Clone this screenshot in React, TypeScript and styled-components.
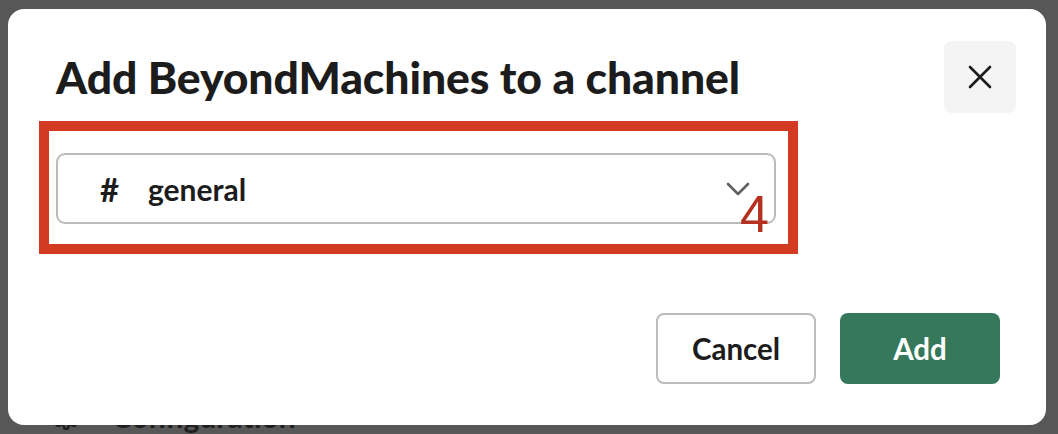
import React from "react";
import styled, { createGlobalStyle } from "styled-components";

const GlobalStyle = createGlobalStyle`
  html, body { margin: 0; padding: 0; }
  body {
    background: #575757;
    font-family: Lato, "Noto Sans", sans-serif;
    -webkit-font-smoothing: antialiased;
  }
`;

const Stage = styled.div`
  position: relative;
  width: 1058px;
  height: 434px;
  overflow: hidden;
  background: #575757;
  display: flex;
  flex-direction: column;
  justify-content: flex-end;
`;

const BehindRow = styled.div`
  display: flex;
  align-items: center;
  gap: 32px;
  padding-left: 52px;
  margin-bottom: -4px;
  color: #1f1f1f;
  font-family: Lato, sans-serif;
  font-weight: 700;
  font-size: 30px;
  height: 44px;
`;

const Modal = styled.div`
  position: absolute;
  left: 8px;
  top: 9px;
  width: 1038px;
  height: 416px;
  background: #ffffff;
  border-radius: 16px;
  display: flex;
  flex-direction: column;
  box-sizing: border-box;
`;

const Header = styled.div`
  display: flex;
  align-items: center;
  justify-content: space-between;
  padding: 32px 30px 0 48px;
`;

const Title = styled.h1`
  margin: 0;
  font-family: Lato, sans-serif;
  font-weight: 900;
  font-size: 44.5px;
  line-height: 1.2;
  color: #1d1c1d;
  letter-spacing: -0.1px;
`;

const CloseButton = styled.button`
  width: 72px;
  height: 72px;
  border: none;
  border-radius: 8px;
  background: #f4f4f4;
  display: flex;
  align-items: center;
  justify-content: center;
  padding: 0;
  color: #1d1c1d;
`;

const Body = styled.div`
  padding: 40px 0 0 48px;
`;

const Select = styled.div`
  width: 720px;
  height: 71px;
  box-sizing: border-box;
  border: 2px solid #bbbbbb;
  border-radius: 9px;
  display: flex;
  align-items: center;
  padding: 0 24px 0 42px;
  color: #1d1c1d;
`;

const Hash = styled.span`
  font-family: Lato, sans-serif;
  font-weight: 700;
  font-size: 33px;
  width: 48px;
`;

const SelectText = styled.span`
  flex: 1;
  font-family: Lato, sans-serif;
  font-weight: 700;
  font-size: 30px;
`;

const Footer = styled.div`
  margin-top: auto;
  display: flex;
  justify-content: flex-end;
  gap: 24px;
  padding: 0 46px 41px 0;
`;

const Button = styled.button<{ $primary?: boolean }>`
  width: 160px;
  height: 71px;
  box-sizing: border-box;
  border-radius: 8px;
  font-family: Lato, sans-serif;
  font-weight: 700;
  font-size: 29.5px;
  cursor: pointer;
  border: ${(p) => (p.$primary ? "none" : "2px solid #bcbcbc")};
  background: ${(p) => (p.$primary ? "#35785c" : "#ffffff")};
  color: ${(p) => (p.$primary ? "#ffffff" : "#1d1c1d")};
`;

const Annotation = styled.div`
  position: absolute;
  left: 31px;
  top: 112px;
  width: 759px;
  height: 133px;
  box-sizing: border-box;
  border: 10px solid #d33a22;
  pointer-events: none;
`;

const StepNumber = styled.span`
  position: absolute;
  left: 732px;
  top: 179px;
  font-family: "Liberation Sans", Arial, sans-serif;
  font-weight: 400;
  font-size: 52px;
  line-height: 1;
  color: #b5301f;
`;

const Gear = () => (
  <svg width="28" height="28" viewBox="0 0 24 24" fill="none" stroke="#1f1f1f" strokeWidth="2.2">
    <circle cx="12" cy="12" r="3" />
    <path d="M19.4 15a1.7 1.7 0 0 0 .3 1.8l.1.1a2 2 0 1 1-2.8 2.8l-.1-.1a1.7 1.7 0 0 0-1.8-.3 1.7 1.7 0 0 0-1 1.5V21a2 2 0 1 1-4 0v-.1a1.7 1.7 0 0 0-1.1-1.5 1.7 1.7 0 0 0-1.8.3l-.1.1a2 2 0 1 1-2.8-2.8l.1-.1a1.7 1.7 0 0 0 .3-1.8 1.7 1.7 0 0 0-1.5-1H3a2 2 0 1 1 0-4h.1a1.7 1.7 0 0 0 1.5-1.1 1.7 1.7 0 0 0-.3-1.8l-.1-.1a2 2 0 1 1 2.8-2.8l.1.1a1.7 1.7 0 0 0 1.8.3H9a1.7 1.7 0 0 0 1-1.5V3a2 2 0 1 1 4 0v.1a1.7 1.7 0 0 0 1 1.5 1.7 1.7 0 0 0 1.8-.3l.1-.1a2 2 0 1 1 2.8 2.8l-.1.1a1.7 1.7 0 0 0-.3 1.8V9a1.7 1.7 0 0 0 1.5 1H21a2 2 0 1 1 0 4h-.1a1.7 1.7 0 0 0-1.5 1z" />
  </svg>
);

export default function App() {
  return (
    <>
      <GlobalStyle />
      <Stage>
        <BehindRow>
          <Gear />
          <span>Configuration</span>
        </BehindRow>
        <Modal>
          <Header>
            <Title>Add BeyondMachines to a channel</Title>
            <CloseButton aria-label="Close">
              <svg width="24" height="24" viewBox="0 0 24 24" fill="none" stroke="currentColor" strokeWidth="2.6" strokeLinecap="round">
                <path d="M2 2 L22 22 M22 2 L2 22" />
              </svg>
            </CloseButton>
          </Header>
          <Body>
            <Select>
              <Hash>#</Hash>
              <SelectText>general</SelectText>
              <svg width="24" height="14" viewBox="0 0 24 14" fill="none" stroke="#616061" strokeWidth="2.6" strokeLinecap="round" strokeLinejoin="round">
                <path d="M2 2 L12 12 L22 2" />
              </svg>
            </Select>
          </Body>
          <Footer>
            <Button>Cancel</Button>
            <Button $primary>Add</Button>
          </Footer>
          <Annotation />
          <StepNumber>4</StepNumber>
        </Modal>
      </Stage>
    </>
  );
}
